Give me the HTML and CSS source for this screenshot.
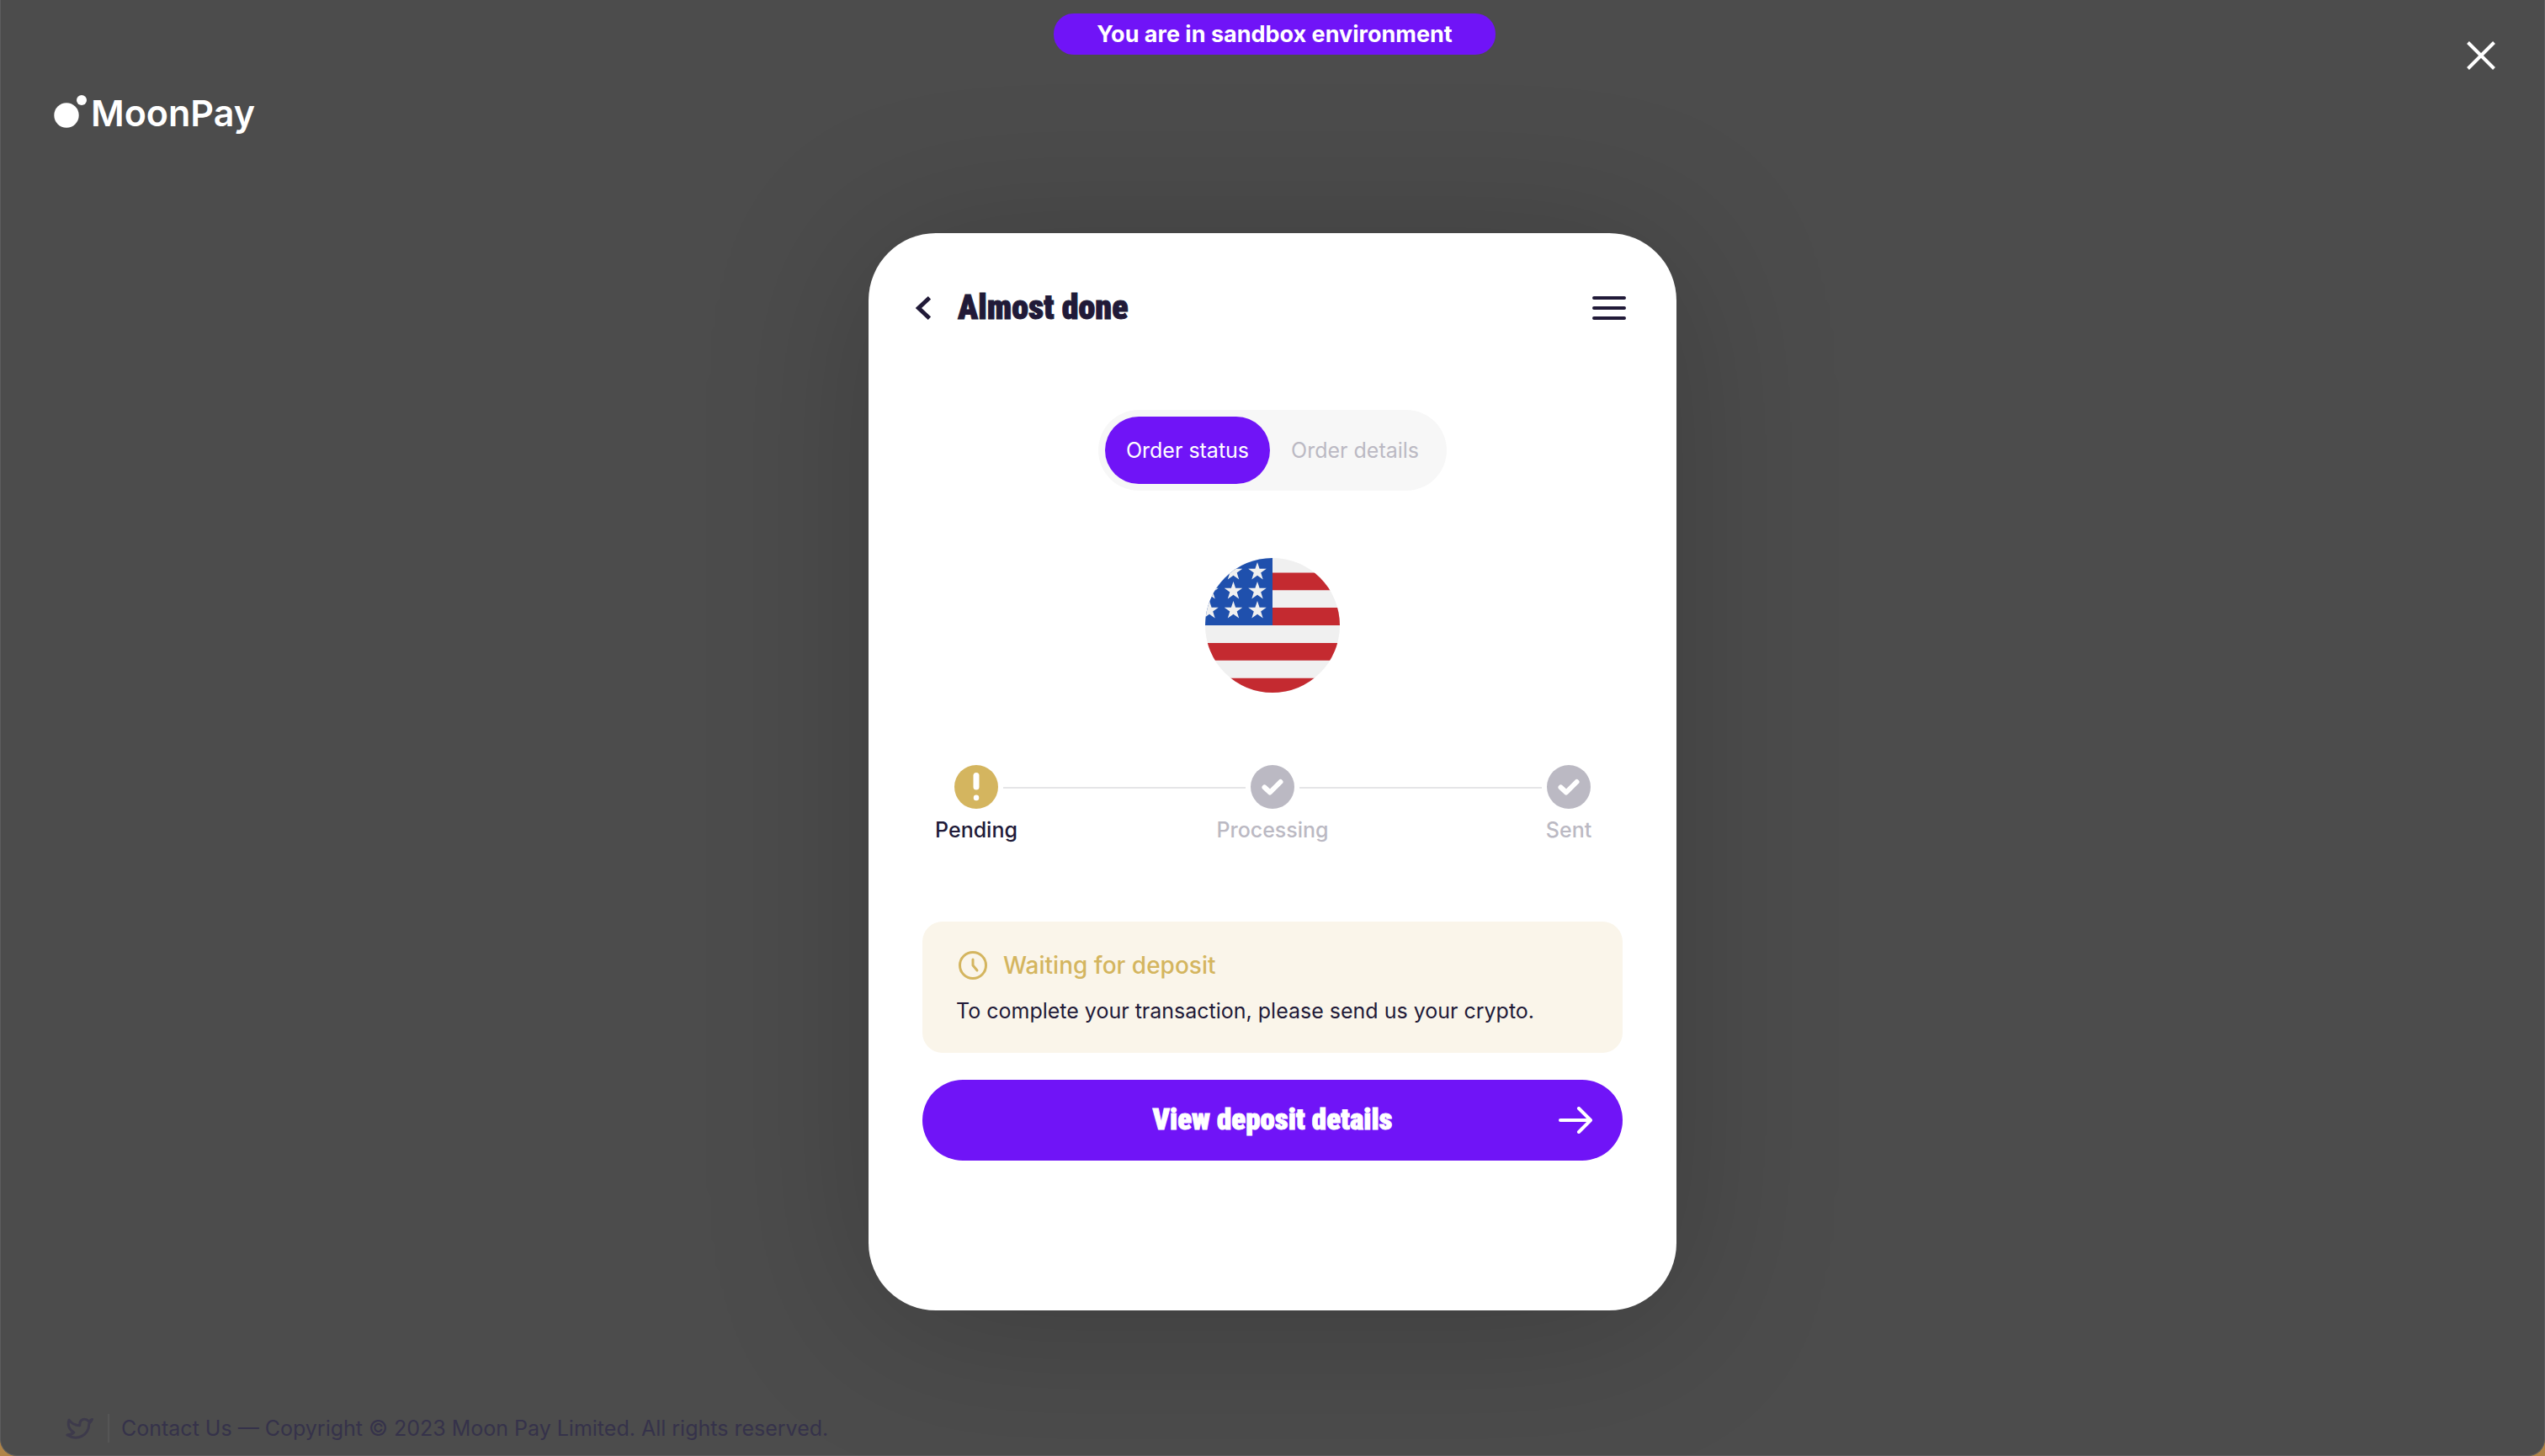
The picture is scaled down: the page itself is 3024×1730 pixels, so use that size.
FILE: index.html
```html
<!DOCTYPE html>
<html lang="en">
<head>
<meta charset="utf-8">
<title>MoonPay – Almost done</title>
<link rel="stylesheet" href="styles.css">
</head>
<body>
<div class="window">
  <header class="topbar">
    <a class="logo" href="#">
      <svg class="logo-mark" viewBox="0 0 40 44" aria-hidden="true"><circle cx="15" cy="25" r="14.700"/><circle cx="33" cy="7" r="6"/></svg>
      <span>MoonPay</span>
    </a>
    <p class="banner">You are in sandbox environment</p>
    <button class="close" type="button" aria-label="Close">
      <svg viewBox="0 0 34 34" aria-hidden="true"><path d="M1.500 1.500l31 31M32.500 1.500l-31 31"/></svg>
    </button>
  </header>

  <main class="stage">
    <section class="card">
      <div class="card-head">
        <button class="icon-button" type="button" aria-label="Back">
          <svg class="back" viewBox="0 0 18 28" aria-hidden="true"><path d="M16.500 1.800L3.500 14l13 12.200"/></svg>
        </button>
        <h1 class="title">Almost done</h1>
        <button class="icon-button" type="button" aria-label="Menu">
          <svg class="menu" viewBox="0 0 40 28" aria-hidden="true"><path d="M2 2h36M2 14h36M2 26h36"/></svg>
        </button>
      </div>

      <div class="tabs" role="tablist">
        <button class="tab tab-active" type="button" role="tab" aria-selected="true">Order status</button>
        <button class="tab" type="button" role="tab" aria-selected="false">Order details</button>
      </div>

      <svg class="flag" viewBox="0 0 160 160" role="img" aria-label="United States">
        <defs>
          <clipPath id="disc"><circle cx="80" cy="80" r="80"/></clipPath>
          <path id="star" d="M0-11l2.600 7.700h8.200L4.200 1.500l2.500 7.900L0 4.700l-6.700 4.700 2.500-7.900-6.600-4.800h8.200z"/>
        </defs>
        <g clip-path="url(#disc)">
          <path fill="#f0f0f0" d="M0 0h160v160H0z"/>
          <path fill="#c42a30" d="M80 17.500h80v20.800H80zM80 59h80v21H80zM0 101h160v20.800H0zM0 142.700h160V160H0z"/>
          <path fill="#1f50ad" d="M0 0h80v80H0z"/>
          <g fill="#f0f0f0">
            <use href="#star" x="33.500" y="16"/><use href="#star" x="62" y="16"/>
            <use href="#star" x="5" y="39"/><use href="#star" x="33.500" y="39"/><use href="#star" x="62" y="39"/>
            <use href="#star" x="5" y="62"/><use href="#star" x="33.500" y="62"/><use href="#star" x="62" y="62"/>
          </g>
        </g>
      </svg>

      <ol class="steps">
        <li class="step step-current">
          <svg class="step-icon" viewBox="0 0 52 52" aria-hidden="true"><circle cx="26" cy="26" r="26"/><path d="M26 12.500v13.500" stroke-width="7"/><path d="M26 38.800v.100" stroke-width="6.500"/></svg>
          <span>Pending</span>
        </li>
        <li class="rail"></li>
        <li class="step">
          <svg class="step-icon" viewBox="0 0 52 52" aria-hidden="true"><circle cx="26" cy="26" r="26"/><path d="M16.500 26.500l6.500 6L35.500 20" stroke-width="6"/></svg>
          <span>Processing</span>
        </li>
        <li class="rail"></li>
        <li class="step">
          <svg class="step-icon" viewBox="0 0 52 52" aria-hidden="true"><circle cx="26" cy="26" r="26"/><path d="M16.500 26.500l6.500 6L35.500 20" stroke-width="6"/></svg>
          <span>Sent</span>
        </li>
      </ol>

      <div class="notice">
        <h2 class="notice-title">
          <svg class="clock" viewBox="0 0 40 40" aria-hidden="true"><circle cx="20" cy="20" r="15.500"/><path d="M20 13v7l5 6"/></svg>
          Waiting for deposit
        </h2>
        <p class="notice-text">To complete your transaction, please send us your crypto.</p>
      </div>

      <button class="primary" type="button">
        <span>View deposit details</span>
        <svg class="arrow" viewBox="0 0 40 32" aria-hidden="true"><path d="M2 16h35M24 2l14 14-14 14"/></svg>
      </button>
    </section>
  </main>

  <footer class="footer">
    <a class="social" href="#" aria-label="Twitter">
      <svg viewBox="0 0 34 28" aria-hidden="true"><path d="M31.500 3.500c-1.500 1-2.800 1.700-4.300 2.100C23 1 16.500 3.500 16.800 9.500v1.200C11.500 10.800 7 8.300 4 4.200c-2 6 .200 12 5.800 14.800-2.400 2-5 3-8 3 12 7.500 26 .500 26-13.500 1.700-1.500 2.900-3 3.700-5z"/></svg>
    </a>
    <p class="legal"><a href="#">Contact Us</a> — Copyright © 2023 Moon Pay Limited. All rights reserved.</p>
  </footer>
</div>
</body>
</html>
```
FILE: styles.css
```css
:root {
  --violet: #7014f7;
  --ink: #211a38;
  --muted: #bbb9c3;
  --gold: #d4b55f;
}

* { box-sizing: border-box; }

body {
  margin: 0;
  background: #b08448;
  color: var(--ink);
  font-family: Inter, "Noto Sans", sans-serif;
  font-size: 25px;
  line-height: 34px;
}

h1, h2, p, ol { margin: 0; padding: 0; }
ol { list-style: none; }
a { color: inherit; text-decoration: none; }
svg { display: block; fill: none; flex: none; }

button {
  border: 0;
  padding: 0;
  background: none;
  color: inherit;
  font: inherit;
  cursor: pointer;
}

.window {
  display: flex;
  flex-direction: column;
  min-height: 100vh;
  background: #4c4c4c;
  border: 1px solid #5c5c5e;
  border-top: 0;
  border-radius: 0 0 20px 20px;
}

.topbar {
  display: grid;
  grid-template-columns: 1fr auto 1fr;
  align-items: start;
  height: 162px;
  padding: 16px 58px 0 63px;
}

.logo {
  display: flex;
  align-items: center;
  gap: 4px;
  justify-self: start;
  margin-top: 92px;
  color: #fff;
  font-size: 43px;
  font-weight: 600;
  line-height: 52px;
}

.logo-mark { width: 40px; height: 44px; fill: #fff; }

.banner {
  padding: 1px 51px 0;
  border-radius: 24px;
  background: var(--violet);
  color: #fff;
  font-size: 27px;
  font-weight: 700;
  line-height: 48px;
}

.close { justify-self: end; margin-top: 33px; }
.close svg { width: 34px; height: 34px; stroke: #fff; stroke-width: 4; }

.stage {
  flex: 1;
  display: flex;
  align-items: center;
  justify-content: center;
}

.card {
  display: flex;
  flex-direction: column;
  width: 100%;
  max-width: 960px;
  padding: 64px 64px 178px;
  border-radius: 80px;
  background: #fff;
  box-shadow: 0 16px 200px rgba(0, 0, 0, 0.2);
}

.card-head {
  display: flex;
  align-items: center;
  gap: 32px;
  height: 50px;
  margin: 0 -4px 0 -8px;
}

.back { width: 18px; height: 28px; stroke: var(--ink); stroke-width: 5; }
.menu { width: 40px; height: 28px; stroke: var(--ink); stroke-width: 4; stroke-linecap: round; }

.title, .primary {
  font-family: "Roboto Condensed", Roboto, sans-serif;
  font-weight: 900;
  -webkit-text-stroke: 1px currentColor;
}

.title { flex: 1; font-size: 40px; line-height: 48px; }

.tabs {
  display: flex;
  align-self: center;
  margin-top: 96px;
  padding: 8px;
  border-radius: 48px;
  background: #f7f7f7;
}

.tab {
  padding: 0 25px;
  border-radius: 40px;
  color: var(--muted);
  line-height: 80px;
}

.tab-active { background: var(--violet); color: #fff; }

.flag { align-self: center; width: 160px; height: 160px; margin-top: 80px; }

.steps { display: flex; margin-top: 86px; padding: 0 38px; }

.step {
  display: flex;
  flex-direction: column;
  align-items: center;
  gap: 8px;
  width: 52px;
  color: var(--muted);
  font-weight: 500;
}

.step-icon { width: 52px; height: 52px; stroke-linecap: round; stroke-linejoin: round; }
.step-icon circle { fill: var(--muted); }
.step-icon path { stroke: #fff; }
.step-current { color: var(--ink); }
.step-current circle { fill: var(--gold); }

.rail { flex: 1; height: 2px; margin: 26px 6px 0; background: #e5e5e7; }

.notice {
  margin-top: 92px;
  padding: 32px 40px;
  border-radius: 24px;
  background: #faf5ea;
}

.notice-title {
  display: flex;
  align-items: center;
  gap: 16px;
  color: var(--gold);
  font-size: 28px;
  font-weight: 500;
  line-height: 40px;
}

.clock { width: 40px; height: 40px; stroke: var(--gold); stroke-width: 3; stroke-linecap: round; stroke-linejoin: round; }
.notice-text { margin-top: 16px; line-height: 36px; }

.primary {
  display: grid;
  grid-template-columns: 1fr auto 1fr;
  align-items: center;
  height: 96px;
  margin-top: 32px;
  padding: 0 36px;
  border-radius: 48px;
  background: var(--violet);
  color: #fff;
  font-size: 35px;
}

.primary span { grid-column: 2; }
.arrow { justify-self: end; width: 40px; height: 32px; stroke: #fff; stroke-width: 4; stroke-linecap: round; stroke-linejoin: round; }

.footer {
  display: flex;
  align-items: center;
  gap: 16px;
  height: 58px;
  padding: 0 77px 6px;
  color: #35324a;
}

.social svg { width: 34px; height: 28px; stroke: #3d3a4b; stroke-width: 3; stroke-linejoin: round; }
.legal { padding-left: 14px; border-left: 2px solid #555; }
```
